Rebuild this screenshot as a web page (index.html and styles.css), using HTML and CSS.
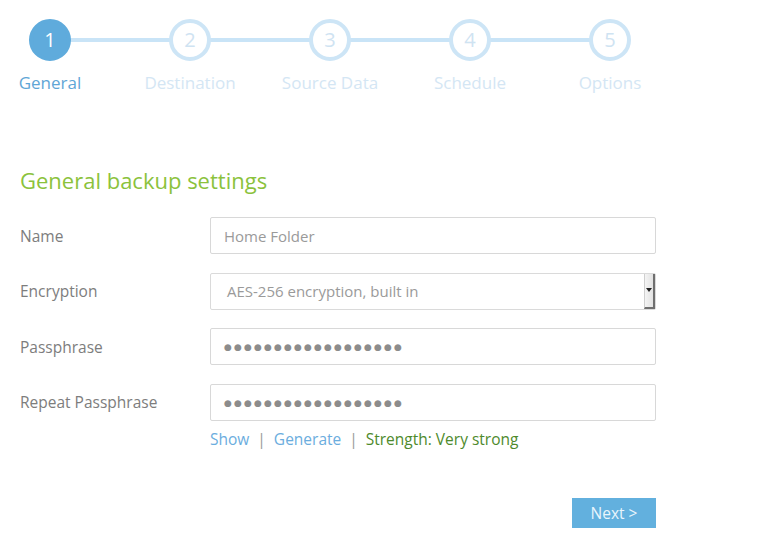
FILE: index.html
```html
<!DOCTYPE html>
<html>
<head>
<meta charset="utf-8">
<link rel="stylesheet" href="styles.css">
</head>
<body>
<div class="steps">
  <div class="step active"><div class="circle">1</div><div class="step-label">General</div></div>
  <div class="step"><div class="circle">2</div><div class="step-label">Destination</div></div>
  <div class="step"><div class="circle">3</div><div class="step-label">Source Data</div></div>
  <div class="step"><div class="circle">4</div><div class="step-label">Schedule</div></div>
  <div class="step last"><div class="circle">5</div><div class="step-label">Options</div></div>
</div>

<h1 class="title">General backup settings</h1>

<div class="form">
  <div class="row">
    <div class="label">Name</div>
    <div class="field">Home Folder</div>
  </div>
  <div class="row">
    <div class="label">Encryption</div>
    <div class="field select"><span class="select-text">AES-256 encryption, built in</span><span class="select-btn"><span class="arrow"></span></span></div>
  </div>
  <div class="row">
    <div class="label">Passphrase</div>
    <div class="field"><span class="dots">●●●●●●●●●●●●●●●●●●</span></div>
  </div>
  <div class="row">
    <div class="label">Repeat Passphrase</div>
    <div class="field"><span class="dots">●●●●●●●●●●●●●●●●●●</span></div>
  </div>
  <div class="links">
    <span class="link">Show</span><span class="sep">|</span><span class="link">Generate</span><span class="sep">|</span><span class="strength">Strength: Very strong</span>
  </div>
  <div class="actions">
    <div class="btn">Next &gt;</div>
  </div>
</div>
</body>
</html>
```

FILE: styles.css
```css
html, body {
  margin: 0;
  padding: 0;
  background: #ffffff;
}
body {
  font-family: "Open Sans", "DejaVu Sans", sans-serif;
  width: 769px;
  height: 539px;
  overflow: hidden;
}
.steps {
  display: flex;
  gap: 40px;
  padding-top: 19px;
}
.step {
  width: 100px;
  display: flex;
  flex-direction: column;
  align-items: center;
  position: relative;
}
.step::after {
  content: "";
  position: absolute;
  left: 50px;
  top: 19px;
  width: 140px;
  height: 4px;
  background: #c9e4f7;
  z-index: 0;
}
.step.last::after { display: none; }
.circle {
  position: relative;
  z-index: 1;
  box-sizing: border-box;
  width: 42px;
  height: 42px;
  border-radius: 50%;
  border: 4px solid #cde5f6;
  background: #ffffff;
  color: #cfe3f2;
  font-size: 20px;
  line-height: 34px;
  text-align: center;
}
.step.active .circle {
  background: #5fabdc;
  border-color: #5fabdc;
  color: #ffffff;
}
.step-label {
  margin-top: 10px;
  font-size: 17px;
  line-height: 23px;
  color: #d4e6f4;
  white-space: nowrap;
}
.step.active .step-label { color: #5fa6d6; }

.title {
  margin: 71px 0 0 20px;
  font-size: 22px;
  font-weight: normal;
  line-height: 30px;
  color: #8bc23c;
}
.form {
  padding-left: 20px;
  width: 636px;
  margin-top: 22px;
}
.row {
  display: flex;
  align-items: center;
  height: 37px;
  margin-bottom: 18.5px;
}
.label {
  width: 190px;
  font-size: 15.5px;
  color: #7d7d7d;
}
.field {
  box-sizing: border-box;
  width: 446px;
  height: 37px;
  border: 1px solid #d8d8d8;
  border-radius: 2px;
  padding-left: 13px;
  display: flex;
  align-items: center;
  font-size: 15px;
  color: #9a9a9a;
}
.select {
  padding-left: 16px;
  padding-right: 0;
  border-color: #dadada;
}
.select-text { flex: 1; }
.select-btn {
  width: 11px;
  height: 35px;
  background: linear-gradient(to right, #f4f4f4, #e2e2e2);
  border-left: 1px solid #cfcfcf;
  border-right: 2px solid #6f6f6f;
  border-bottom: 2px solid #6f6f6f;
  box-sizing: border-box;
  display: flex;
  align-items: center;
  justify-content: center;
}
.arrow {
  width: 0;
  height: 0;
  border-left: 3px solid transparent;
  border-right: 3px solid transparent;
  border-top: 4px solid #222;
}
.dots {
  font-size: 9px;
  letter-spacing: 2.15px;
  color: #8c8c8c;
}
.links {
  margin-top: -10px;
  padding-left: 190px;
  font-size: 15.5px;
  line-height: 20px;
  display: flex;
  align-items: center;
}
.link { color: #6badde; }
.sep { color: #9a9a9a; margin: 0 8px; }
.strength { color: #4e8a2c; }
.actions {
  display: flex;
  justify-content: flex-end;
  margin-top: 49px;
}
.btn {
  width: 84px;
  height: 30px;
  background: #62b0de;
  color: #e9f5fc;
  font-size: 15.5px;
  line-height: 30px;
  text-align: center;
}
```
